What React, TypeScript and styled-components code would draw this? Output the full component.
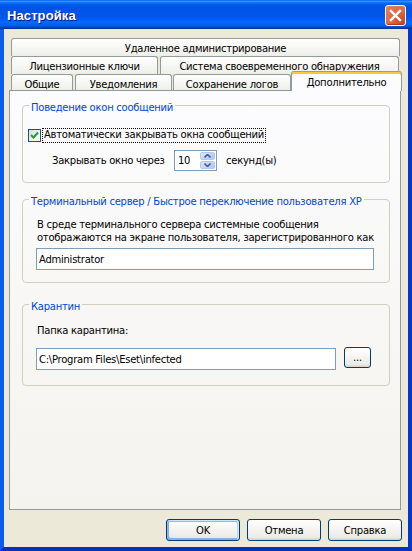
import styled, { createGlobalStyle, css } from "styled-components";

const GlobalStyle = createGlobalStyle`
  html, body {
    margin: 0;
    padding: 0;
  }
  body {
    width: 412px;
    height: 551px;
    overflow: hidden;
    background: #ece9d8;
    font-family: Tahoma, "DejaVu Sans", sans-serif;
    font-size: 10px;
    letter-spacing: -0.25px;
    color: #000;
  }
`;

interface TabInfo {
  label: string;
  width: number;
  gap?: number;
  active?: boolean;
}

const tabRows: { height: number; tabs: TabInfo[] }[] = [
  { height: 18, tabs: [{ label: "Удаленное администрирование", width: 389 }] },
  {
    height: 18,
    tabs: [
      { label: "Лицензионные ключи", width: 147 },
      { label: "Система своевременного обнаружения", width: 239, gap: 2 },
    ],
  },
  {
    height: 16,
    tabs: [
      { label: "Общие", width: 62 },
      { label: "Уведомления", width: 97, gap: 2 },
      { label: "Сохранение логов", width: 118, gap: 1 },
      { label: "Дополнительно", width: 111, active: true },
    ],
  },
];

const CheckMark = () => (
  <svg width="11" height="11" viewBox="0 0 11 11">
    <polyline
      points="2,5 4.5,7.5 9,2.5"
      fill="none"
      stroke="#21a121"
      strokeWidth="2"
    />
  </svg>
);

const Arrow = ({ up }: { up?: boolean }) => (
  <svg width="7" height="4" viewBox="0 0 7 4">
    <path
      d={up ? "M0.5 3.5 L3.5 0.5 L6.5 3.5" : "M0.5 0.5 L3.5 3.5 L6.5 0.5"}
      fill="none"
      stroke="#4d6185"
      strokeWidth="1.6"
    />
  </svg>
);

const App = () => {
  return (
    <>
      <GlobalStyle />
      <Window>
        <TitleBar>
          <Title>Настройка</Title>
          <CloseButton>
            <svg width="19" height="19" viewBox="0 0 19 19">
              <path
                d="M5 5 L14 14 M14 5 L5 14"
                stroke="#fff"
                strokeWidth="2.4"
                strokeLinecap="square"
              />
            </svg>
          </CloseButton>
        </TitleBar>
        <Client>
          <TabStrip>
            {tabRows.map((row, i) => (
              <TabRow key={i} $height={row.height}>
                {row.tabs.map((tab) => (
                  <Tab
                    key={tab.label}
                    $width={tab.width}
                    $gap={tab.gap}
                    $active={tab.active}
                  >
                    {tab.label}
                  </Tab>
                ))}
              </TabRow>
            ))}
          </TabStrip>
          <Panel>
            <Group $top={0} $bottom={11}>
              <Legend>Поведение окон сообщений</Legend>
              <CheckRow>
                <CheckBox>
                  <CheckMark />
                </CheckBox>
                <FocusLabel>Автоматически закрывать окна сообщений</FocusLabel>
              </CheckRow>
              <SpinRow>
                <SpinLabel>Закрывать окно через</SpinLabel>
                <SpinBox>
                  <SpinValue>10</SpinValue>
                  <SpinButtons>
                    <SpinButton>
                      <Arrow up />
                    </SpinButton>
                    <SpinButton>
                      <Arrow />
                    </SpinButton>
                  </SpinButtons>
                </SpinBox>
                <SpinSuffix>секунд(ы)</SpinSuffix>
              </SpinRow>
            </Group>

            <Group $top={8} $bottom={12}>
              <Legend>Терминальный сервер / Быстрое переключение пользователя XP</Legend>
              <Note $top={10}>
                В среде терминального сервера системные сообщения
                <br />
                отображаются на экране пользователя, зарегистрированного как
              </Note>
              <FieldRow $top={4}>
                <TextField $width={338} readOnly value="Administrator" />
              </FieldRow>
            </Group>

            <Group $top={13} $bottom={15}>
              <Legend>Карантин</Legend>
              <Note $top={11}>Папка карантина:</Note>
              <FieldRow $top={11}>
                <TextField
                  $width={300}
                  readOnly
                  value="C:\Program Files\Eset\infected"
                />
                <BrowseButton>...</BrowseButton>
              </FieldRow>
            </Group>
          </Panel>
          <ButtonRow>
            <DialogButton $default>OK</DialogButton>
            <DialogButton>Отмена</DialogButton>
            <DialogButton>Справка</DialogButton>
          </ButtonRow>
        </Client>
      </Window>
    </>
  );
};

export default App;

const Window = styled.div`
  width: 412px;
  height: 551px;
  display: flex;
  flex-direction: column;
`;

const TitleBar = styled.div`
  flex: none;
  height: 29px;
  box-sizing: border-box;
  display: flex;
  align-items: flex-start;
  padding: 5px 6px 0 7px;
  background: linear-gradient(
    180deg,
    #0058ee 0%,
    #3593ff 4%,
    #288eff 6%,
    #127dff 8%,
    #036ffc 10%,
    #0262ee 14%,
    #0057e5 20%,
    #0054e3 24%,
    #0055eb 56%,
    #005bf5 66%,
    #026afe 76%,
    #0062ef 86%,
    #0052d6 92%,
    #0040ab 96%,
    #003092 100%
  );
`;

const Title = styled.span`
  flex: 1;
  padding-top: 3px;
  font: bold 13px "Liberation Sans", Arial, sans-serif;
  letter-spacing: 0.1px;
  color: #fff;
  text-shadow: 1px 1px #0f1089;
`;

const CloseButton = styled.div`
  width: 21px;
  height: 21px;
  box-sizing: border-box;
  border: 1px solid #fff;
  border-radius: 3px;
  display: flex;
  align-items: center;
  justify-content: center;
  background: radial-gradient(
    circle at 85% 85%,
    #cc4627 0%,
    #dc6542 45%,
    #e68660 100%
  );
  box-shadow: inset 0 -1px 1px #b0381c;
`;

const Client = styled.div`
  flex: 1;
  display: flex;
  flex-direction: column;
  background: #ece9d8;
  border-left: 4px solid #0a5ced;
  border-right: 4px solid #0637c9;
  border-bottom: 4px solid #0431bd;
  padding: 9px 7px 6px 5px;
`;

const TabStrip = styled.div`
  flex: none;
  display: flex;
  flex-direction: column;
  padding-left: 2px;
`;

const TabRow = styled.div<{ $height: number }>`
  display: flex;
  height: ${(p) => p.$height}px;
`;

const Tab = styled.div<{ $width: number; $gap?: number; $active?: boolean }>`
  box-sizing: border-box;
  flex: none;
  width: ${(p) => p.$width}px;
  margin-left: ${(p) => p.$gap ?? 0}px;
  height: 100%;
  padding-top: 3px;
  line-height: 13px;
  text-align: center;
  white-space: nowrap;
  border: 1px solid #919b9c;
  border-bottom: none;
  border-radius: 3px 3px 0 0;
  background: linear-gradient(
    180deg,
    #fff,
    #fafaf9 26%,
    #f0f0ea 95%,
    #ecebe6
  );
  ${(p) =>
    p.$active &&
    css`
      position: relative;
      z-index: 1;
      height: 20px;
      margin-top: -3px;
      padding-top: 4px;
      border-top-color: #e68b2c;
      background: #fcfcfe;
      box-shadow: inset 0 2px #ffc73c;
    `}
`;

const Panel = styled.div`
  flex: 1;
  display: flex;
  flex-direction: column;
  border: 1px solid #919b9c;
  background: linear-gradient(180deg, #fcfcfe, #f4f3ee);
  padding: 6px 10px 0 12px;
`;

const Group = styled.fieldset<{ $top: number; $bottom: number }>`
  margin: ${(p) => p.$top}px 0 0;
  padding: 0 6px ${(p) => p.$bottom}px 5px;
  min-width: 0;
  border: 1px solid #d0d0bf;
  border-radius: 4px;
`;

const Legend = styled.legend`
  margin-left: 1px;
  padding: 4px 2px 0;
  line-height: 13px;
  color: #0046d5;
  white-space: nowrap;
`;

const CheckRow = styled.div`
  display: flex;
  align-items: center;
  height: 13px;
  margin-top: 15px;
`;

const CheckBox = styled.span`
  flex: none;
  width: 13px;
  height: 13px;
  box-sizing: border-box;
  display: flex;
  align-items: center;
  justify-content: center;
  border: 1px solid #1c5180;
  background: linear-gradient(135deg, #dcdcd7, #fff);
`;

const FocusLabel = styled.span`
  margin-left: 2px;
  padding: 0 1px;
  height: 13px;
  box-sizing: border-box;
  line-height: 11px;
  white-space: nowrap;
  outline: 1px dotted #000;
`;

const SpinRow = styled.div`
  display: flex;
  align-items: center;
  height: 21px;
  margin-top: 8px;
`;

const SpinLabel = styled.span`
  width: 122px;
  margin-left: 24px;
  white-space: nowrap;
`;

const SpinBox = styled.div`
  width: 43px;
  height: 21px;
  box-sizing: border-box;
  display: flex;
  border: 1px solid #7f9db9;
  background: #fff;
`;

const SpinValue = styled.span`
  flex: 1;
  padding-left: 3px;
  line-height: 19px;
`;

const SpinButtons = styled.div`
  width: 15px;
  padding: 1px 1px 1px 0;
  display: flex;
  flex-direction: column;
  gap: 1px;
`;

const SpinButton = styled.div`
  flex: 1;
  display: flex;
  align-items: center;
  justify-content: center;
  border-radius: 2px;
  border: 1px solid #b4c8f6;
  background: linear-gradient(135deg, #dde7fd, #bfd1f9 60%, #b0c4f4);
`;

const SpinSuffix = styled.span`
  margin-left: 9px;
  white-space: nowrap;
`;

const Note = styled.div<{ $top: number }>`
  margin: ${(p) => p.$top}px 0 0 9px;
  line-height: 13px;
  white-space: nowrap;
`;

const FieldRow = styled.div<{ $top: number }>`
  display: flex;
  align-items: flex-start;
  margin: ${(p) => p.$top}px 0 0 8px;
`;

const TextField = styled.input<{ $width: number }>`
  width: ${(p) => p.$width}px;
  height: 22px;
  box-sizing: border-box;
  margin: 0;
  padding: 0 2px;
  border: 1px solid #7f9db9;
  background: #fff;
  font: inherit;
  letter-spacing: inherit;
  color: #000;
  outline: none;
`;

const buttonFace = css`
  box-sizing: border-box;
  margin: 0;
  padding: 0;
  font: inherit;
  letter-spacing: inherit;
  color: #000;
  border: 1px solid #003c74;
  border-radius: 3px;
  background: linear-gradient(180deg, #fff, #ecebe6 86%, #d6d0c5);
`;

const BrowseButton = styled.button`
  ${buttonFace};
  width: 27px;
  height: 21px;
  margin: -1px 0 0 8px;
`;

const ButtonRow = styled.div`
  flex: none;
  display: flex;
  justify-content: flex-end;
  gap: 7px;
  margin: 9px -1px 0 0;
`;

const DialogButton = styled.button<{ $default?: boolean }>`
  ${buttonFace};
  width: 74px;
  height: 22px;
  ${(p) =>
    p.$default &&
    css`
      box-shadow: inset -1px 1px #cee7ff, inset 1px 2px #98b4ea,
        inset -2px 2px #bcd4f6, inset 1px -1px #89ade4,
        inset 2px -2px #89ade4;
    `}
`;
